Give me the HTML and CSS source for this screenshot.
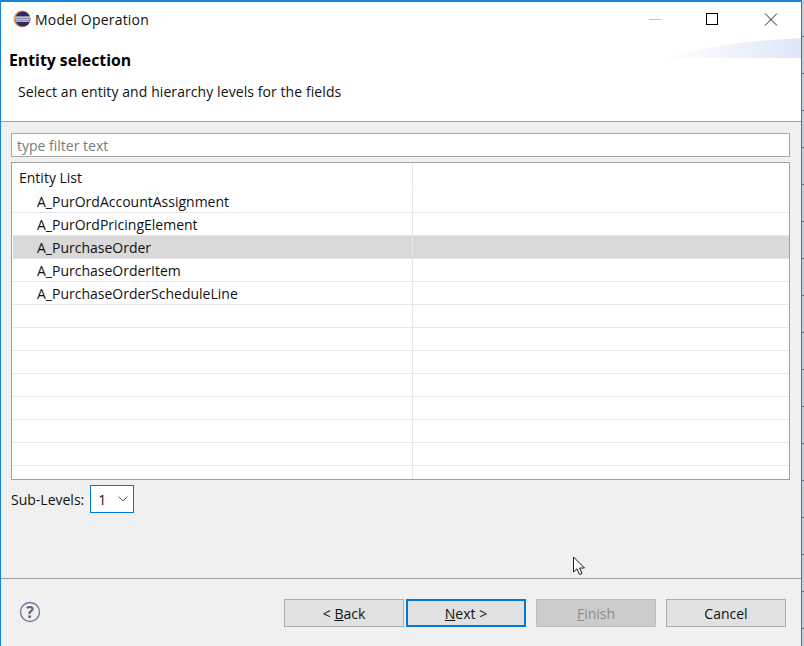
FILE: index.html
```html
<!doctype html>
<html>

<head>
    <title>Model Operation</title>
    <meta charset="utf-8">
    <link rel="stylesheet" href="styles.css">
</head>

<body>
    <div class="window">
        <div class="titlebar">
            <svg class="appicon" width="18" height="18" viewBox="0 0 18 18">
                <circle cx="9" cy="9" r="8.5" fill="#e0a060"/>
                <circle cx="9.8" cy="9" r="7.6" fill="#2e2a6a"/>
                <rect x="2.4" y="6.4" width="14.6" height="1.4" fill="#dcdce8"/>
                <rect x="2.2" y="8.4" width="14.8" height="1.4" fill="#dcdce8"/>
                <rect x="2.6" y="10.4" width="14" height="1.4" fill="#dcdce8"/>
            </svg>
            <span class="title">Model Operation</span>
            <div class="winbtns">
                <svg width="14" height="14" viewBox="0 0 14 14"><path d="M1 7.5H13" stroke="#c4c4c4" fill="none"/></svg>
                <svg width="14" height="14" viewBox="0 0 14 14"><rect x="0.5" y="1.5" width="11" height="11" stroke="#000" fill="none"/></svg>
                <svg width="14" height="14" viewBox="0 0 14 14"><path d="M1 1.5L13 13.5M13 1.5L1 13.5" stroke="#222" fill="none"/></svg>
            </div>
        </div>
        <div class="banner">
            <div class="swoosh"></div>
            <h1>Entity selection</h1>
            <p>Select an entity and hierarchy levels for the fields</p>
        </div>
        <div class="content">
            <div class="filter">type filter text</div>
            <div class="list">
                <div class="row header"><div class="cell first">Entity List</div><div class="cell"></div></div>
                <div class="row"><div class="cell first child">A_PurOrdAccountAssignment</div><div class="cell"></div></div>
                <div class="row"><div class="cell first child">A_PurOrdPricingElement</div><div class="cell"></div></div>
                <div class="row selected"><div class="cell first child">A_PurchaseOrder</div><div class="cell"></div></div>
                <div class="row"><div class="cell first child">A_PurchaseOrderItem</div><div class="cell"></div></div>
                <div class="row"><div class="cell first child">A_PurchaseOrderScheduleLine</div><div class="cell"></div></div>
                <div class="row"><div class="cell first"></div><div class="cell"></div></div>
                <div class="row"><div class="cell first"></div><div class="cell"></div></div>
                <div class="row"><div class="cell first"></div><div class="cell"></div></div>
                <div class="row"><div class="cell first"></div><div class="cell"></div></div>
                <div class="row"><div class="cell first"></div><div class="cell"></div></div>
                <div class="row"><div class="cell first"></div><div class="cell"></div></div>
                <div class="row"><div class="cell first"></div><div class="cell"></div></div>
                <div class="row"><div class="cell first"></div><div class="cell"></div></div>
            </div>
            <div class="levels">
                <span>Sub-Levels:</span>
                <div class="combo">
                    <span>1</span>
                    <svg width="10" height="6" viewBox="0 0 10 6"><path d="M0.5 0.5L5 5L9.5 0.5" stroke="#555" fill="none"/></svg>
                </div>
            </div>
            <svg class="cursor" width="14" height="20" viewBox="0 0 14 20">
                <path d="M1.5 1V16L5 12.8L7.5 18.5L10 17.4L7.6 12H12.5Z" fill="#fff" stroke="#1a1a1a"/>
            </svg>
        </div>
        <div class="footer">
            <svg class="help" width="22" height="22" viewBox="0 0 22 22">
                <circle cx="11" cy="11" r="9.5" fill="none" stroke="#6f7a94" stroke-width="1.4"/>
                <text x="11" y="16.5" text-anchor="middle" class="helpmark">?</text>
            </svg>
            <div class="buttons">
                <button class="btn">&lt; <u>B</u>ack</button>
                <button class="btn default"><u>N</u>ext &gt;</button>
                <button class="btn disabled"><u>F</u>inish</button>
                <button class="btn cancel">Cancel</button>
            </div>
        </div>
    </div>
</body>

</html>
```

FILE: styles.css
```css
html, body {
    margin: 0;
    height: 100%;
    overflow: hidden;
}

html {
    background: repeating-linear-gradient(to bottom, #c3ced6 0, #c3ced6 36px, #5f6f86 36px, #5f6f86 37px);
}

body {
    font-family: "Open Sans", "Noto Sans", sans-serif;
    font-size: 14px;
    color: #111;
}

.window {
    box-sizing: border-box;
    width: 802px;
    height: 646px;
    border-top: 2px solid #1883d7;
    border-left: 1px solid #1883d7;
    border-right: 1px solid #1883d7;
    background-color: #f0f0f0;
    display: flex;
    flex-direction: column;
}

.titlebar {
    height: 36px;
    background-color: #fff;
    display: flex;
    align-items: center;
    padding: 0 0 2px 12px;
    box-sizing: border-box;
}

.appicon {
    margin-right: 4px;
}

.title {
    font-size: 14px;
    letter-spacing: 0.2px;
}

.winbtns {
    margin-left: auto;
    display: flex;
    gap: 44px;
    padding-right: 23px;
}

.banner {
    position: relative;
    height: 83px;
    background-color: #fff;
    border-bottom: 1px solid #a0a0a0;
}

.swoosh {
    position: absolute;
    right: 0;
    top: 0;
    width: 138px;
    height: 20px;
    background: linear-gradient(to right, #fff, #dfe6f7);
    clip-path: polygon(0 100%, 30% 55%, 60% 20%, 100% 0, 100% 100%);
}

h1 {
    margin: 0;
    padding: 12px 0 0 8px;
    font-size: 15.8px;
    font-weight: 700;
    line-height: 20px;
    color: #000;
}

.banner p {
    margin: 0;
    padding: 12px 0 0 17px;
    line-height: 20px;
    letter-spacing: 0.08px;
}

.content {
    flex: 1;
    position: relative;
    padding: 11px 11px 0 10px;
}

.filter {
    box-sizing: border-box;
    height: 24px;
    background-color: #fff;
    border: 1px solid #a9a9a9;
    color: #7a7a7a;
    padding: 1px 0 0 5px;
    line-height: 22px;
}

.list {
    box-sizing: border-box;
    height: 318px;
    margin-top: 5px;
    background-color: #fff;
    border: 1px solid #a0a0a0;
    padding: 1px 0 0 1px;
    overflow: hidden;
}

.row {
    display: flex;
    height: 23px;
    box-sizing: border-box;
    border-bottom: 1px solid #e6e6e6;
}

.header {
    height: 26px;
    border-bottom-color: transparent;
}

.selected {
    background-color: #d9d9d9;
}

.cell {
    flex: 1;
    line-height: 22px;
}

.first {
    flex: none;
    width: 400px;
    box-sizing: border-box;
    padding: 1px 0 0 6px;
    border-right: 1px solid #e6e6e6;
}

.header .first {
    padding-top: 3px;
}

.child {
    padding-left: 24px;
}

.levels {
    display: flex;
    align-items: center;
    gap: 6px;
    margin-top: 5px;
}

.combo {
    box-sizing: border-box;
    width: 44px;
    height: 28px;
    background-color: #fff;
    border: 1px solid #0078d7;
    display: flex;
    align-items: center;
    justify-content: space-between;
    padding: 0 5px 0 7px;
}

.cursor {
    position: absolute;
    left: 571px;
    top: 434px;
}

.footer {
    height: 68px;
    flex: none;
    border-top: 1px solid #a0a0a0;
    display: flex;
    align-items: center;
    padding: 0 15px 0 18px;
    box-sizing: border-box;
}

.help {
    margin-top: -1px;
}

.helpmark {
    font-family: "Open Sans", sans-serif;
    font-size: 16px;
    font-weight: 700;
    fill: #5c6784;
}

.buttons {
    margin-left: auto;
    display: flex;
}

.btn {
    box-sizing: border-box;
    width: 120px;
    height: 28px;
    background-color: #e1e1e1;
    border: 1px solid #adadad;
    font-family: inherit;
    font-size: 14px;
    color: #111;
    padding: 2px 0 0;
}

.default {
    margin-left: 2px;
    border: 2px solid #0078d7;
}

.disabled {
    margin-left: 10px;
    background-color: #cccccc;
    border-color: #bfbfbf;
    color: #8c8c8c;
}

.cancel {
    margin-left: 10px;
}
```
